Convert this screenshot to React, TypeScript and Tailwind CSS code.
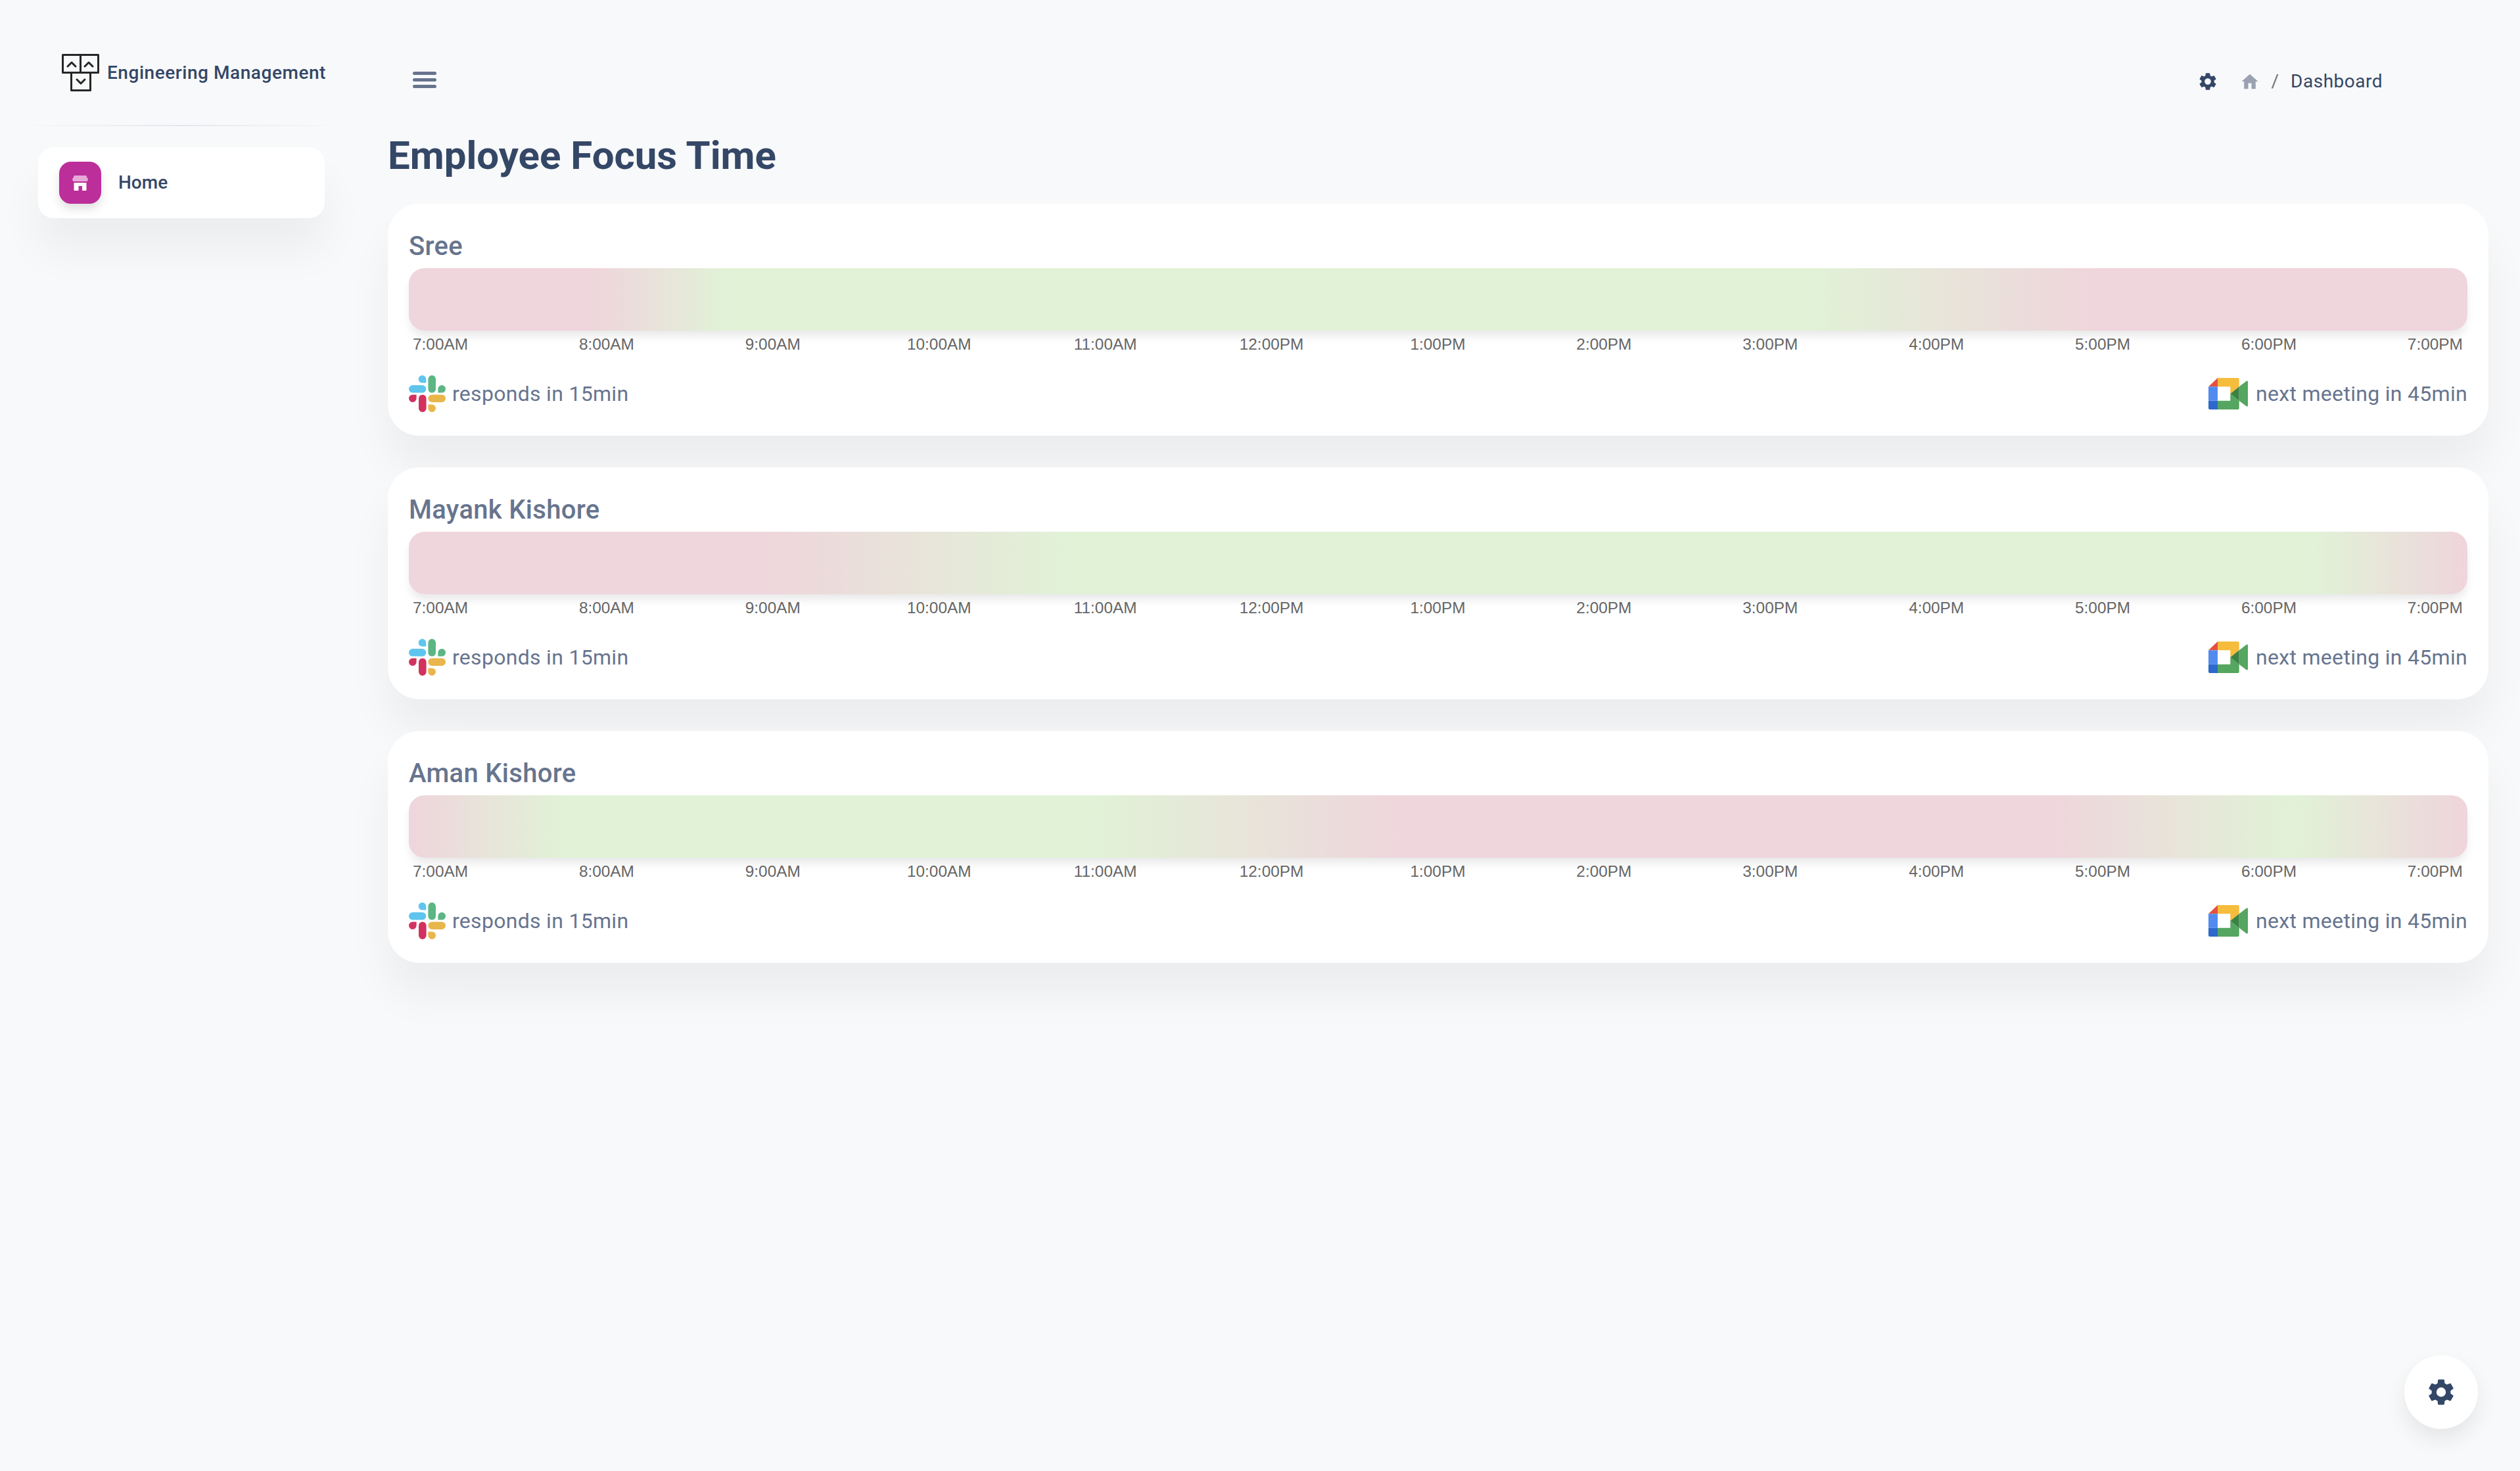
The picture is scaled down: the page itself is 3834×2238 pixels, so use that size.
const hours = ["7:00AM", "8:00AM", "9:00AM", "10:00AM", "11:00AM", "12:00PM", "1:00PM", "2:00PM", "3:00PM", "4:00PM", "5:00PM", "6:00PM", "7:00PM"]

const pink = "#efd5dc"
const green = "#e1f2d7"

const employees = [
  { name: "Sree", stops: `${pink} 0%, ${pink} 9%, ${green} 15.5%, ${green} 68%, ${pink} 82%, ${pink} 100%` },
  { name: "Mayank Kishore", stops: `${pink} 0%, ${pink} 17%, ${green} 32%, ${green} 92.500%, ${pink} 100%` },
  { name: "Aman Kishore", stops: `${pink} 0%, ${green} 7.500%, ${green} 33.500%, ${pink} 48.500%, ${pink} 79.500%, ${green} 91.500%, ${pink} 100%` },
]

function Gear({ className }: { className: string }) {
  return (
    <svg viewBox="0 0 24 24" className={className} fill="currentColor">
      <path d="M19.14 12.94c.04-.3.06-.61.06-.94 0-.32-.02-.64-.07-.94l2.03-1.58a.49.49 0 0 0 .12-.61l-1.92-3.32a.49.49 0 0 0-.59-.22l-2.39.96c-.5-.38-1.03-.7-1.62-.94l-.36-2.54a.48.48 0 0 0-.48-.41h-3.84c-.24 0-.43.17-.47.41l-.36 2.54c-.59.24-1.13.57-1.62.94l-2.39-.96c-.22-.08-.47 0-.59.22L2.74 8.87c-.12.21-.08.47.12.61l2.03 1.58c-.05.3-.09.63-.09.94s.02.64.07.94l-2.03 1.58a.49.49 0 0 0-.12.61l1.92 3.32c.12.22.37.29.59.22l2.39-.96c.5.38 1.03.7 1.62.94l.36 2.54c.05.24.24.41.48.41h3.84c.24 0 .44-.17.47-.41l.36-2.54c.59-.24 1.13-.56 1.62-.94l2.39.96c.22.08.47 0 .59-.22l1.92-3.32c.12-.22.07-.47-.12-.61l-2.01-1.58zM12 15.6A3.6 3.6 0 1 1 12 8.4a3.6 3.6 0 0 1 0 7.2z" />
    </svg>
  )
}

function Logo() {
  return (
    <svg viewBox="0 0 57 57" className="w-[57px] h-[57px] shrink-0" fill="none" stroke="#262626" strokeWidth="3" strokeLinejoin="round" strokeLinecap="round">
      <rect x="1.500" y="1.500" width="27" height="27" />
      <rect x="28.500" y="1.500" width="27" height="27" />
      <rect x="14.500" y="28.500" width="29" height="27" />
      <path d="M9 19l6-6 6 6M35 19l6-6 6 6M23 39l6 6 6-6" />
    </svg>
  )
}

function Slack() {
  return (
    <svg viewBox="0 0 56 56" className="w-[56px] h-[56px] shrink-0">
      <path fill="#5fc5ee" d="M20.500 0a5.800 5.800 0 0 0 0 11.600h5.800V5.800A5.800 5.800 0 0 0 20.500 0zM5.800 15A5.800 5.800 0 0 0 5.800 26.600h14.700a5.800 5.800 0 0 0 0-11.600z" />
      <path fill="#5cb683" d="M56 20.800a5.800 5.800 0 0 0-11.600 0v5.800h5.800a5.800 5.800 0 0 0 5.800-5.800zM41 20.800V5.800a5.800 5.800 0 0 0-11.600 0v15a5.800 5.800 0 0 0 11.600 0z" />
      <path fill="#e8b64a" d="M35.200 56a5.800 5.800 0 0 0 0-11.600h-5.800v5.800a5.800 5.800 0 0 0 5.800 5.800zM35.200 41h15a5.800 5.800 0 0 0 0-11.600h-15a5.800 5.800 0 0 0 0 11.600z" />
      <path fill="#d2325f" d="M0 35.200a5.800 5.800 0 0 0 11.600 0v-5.800H5.800A5.800 5.800 0 0 0 0 35.200zM15 35.200v15a5.800 5.800 0 0 0 11.600 0v-15a5.800 5.800 0 0 0-11.600 0z" />
    </svg>
  )
}

function Meet() {
  return (
    <svg viewBox="0 0 60 48" className="w-[60px] h-[48px] shrink-0">
      <path fill="#e2513e" d="M14 0L0 13.300h14z" />
      <path fill="#528af0" d="M0 13.300h14v21.400H0z" />
      <path fill="#2d68cb" d="M0 34.700h14V48H2a2 2 0 0 1-2-2z" />
      <path fill="#f6bc3c" d="M14 0h30.700a2 2 0 0 1 2 2v11.300L33.300 24V13.300H14z" />
      <path fill="#55a660" d="M14 34.700h19.300V24l13.400 10.700V46a2 2 0 0 1-2 2H14z" />
      <path fill="#55a660" d="M46.700 13.300L57.500 5c1-.8 2.500-.3 2.500 1v36c0 1.300-1.500 1.800-2.500 1L46.700 34.700z" />
      <path fill="#3a8244" d="M33.300 24l13.400-10.700v21.400z" />
    </svg>
  )
}

function Card({ name, stops }: { name: string; stops: string }) {
  return (
    <div className="bg-white rounded-[48px] h-[353px] px-[32px] pt-[36px] shadow-[0_49px_66px_rgba(0,0,0,0.05)]">
      <h2 className="text-[40px] leading-[57px] mb-[5px] font-medium tracking-[0.3px] text-[#67748e]">{name}</h2>
      <div className="h-[95px] rounded-[24px] shadow-[0_10px_15px_-3px_rgba(0,0,0,0.1)]" style={{ background: `linear-gradient(to right, ${stops})` }} />
      <div className="flex justify-between pl-[6px] pr-[7px] mt-[6px] text-[24.4px] leading-[30px] text-[#666666] font-['Liberation_Sans',sans-serif]">
        {hours.map(h => <span key={h} className="w-[84px] flex justify-center whitespace-nowrap">{h}</span>)}
      </div>
      <div className="flex justify-between items-center mt-[30px] text-[32px] leading-[60px] tracking-[0.3px] text-[#67748e]">
        <div className="flex items-center gap-[10px]">
          <Slack />
          <span>responds in 15min</span>
        </div>
        <div className="flex items-center gap-[12px]">
          <Meet />
          <span>next meeting in 45min</span>
        </div>
      </div>
    </div>
  )
}

export default function App() {
  return (
    <div className="min-h-[2238px] bg-[#f8f9fa] flex font-['Roboto',sans-serif] relative">
      {/* Sidebar */}
      <aside className="w-[590px] shrink-0 pl-[58px] pt-[82px]">
        <div className="flex items-center gap-[12px] pl-[36px] h-[57px]">
          <Logo />
          <span className="text-[28px] font-medium tracking-[0.55px] text-[#344767] whitespace-nowrap">Engineering Management</span>
        </div>
        <div className="h-[2px] mt-[51px] -ml-[28px] w-[492px] bg-gradient-to-r from-transparent via-[#e5e7ee] to-transparent" />
        <div className="mt-[32px] w-[436px] h-[108px] bg-white rounded-[24px] flex items-center pl-[32px] gap-[26px] shadow-[0_49px_66px_rgba(0,0,0,0.05)]">
          <div className="w-[64px] h-[64px] rounded-[18px] bg-[#bc2e9a] flex items-center justify-center shadow-[0_8px_14px_rgba(0,0,0,0.12)]">
            <svg viewBox="0 0 24 24" className="w-[24px] h-[24px]">
              <path fill="#e6a9d8" d="M3 1h18l3 6c0 .8-.5 2-2 3H2C.5 9 0 7.800 0 7z" />
              <path fill="#fff" d="M2.500 12h19v12h-6.500v-7H9.500v7h-7z" />
            </svg>
          </div>
          <span className="text-[28px] font-medium text-[#344767]">Home</span>
        </div>
      </aside>

      {/* Main */}
      <main className="flex-1 min-w-0 pr-[48px] pt-[88px]">
        <header className="flex items-center justify-between h-[66px]">
          <button className="ml-[38px] flex flex-col gap-[5px] w-[36px]">
            <span className="h-[5px] rounded-full bg-[#67748e]" />
            <span className="h-[5px] rounded-full bg-[#67748e]" />
            <span className="h-[5px] rounded-full bg-[#67748e]" />
          </button>
          <div className="flex items-center mr-[161px] mt-[5px] text-[#344767]">
            <Gear className="w-[32px] h-[32px]" />
            <svg viewBox="0 0 24 24" className="w-[30px] h-[30px] ml-[33px] text-[#9aa1b1]" fill="currentColor">
              <path d="M10 21v-7h4v7h5v-9h3L12 3 2 12h3v9z" />
            </svg>
            <span className="ml-[18px] text-[28px] text-[#6c757d]">/</span>
            <span className="ml-[18px] text-[28px] tracking-[0.5px]">Dashboard</span>
          </div>
        </header>
        <h1 className="mt-[47px] text-[60px] leading-[72px] font-bold text-[#344767]">Employee Focus Time</h1>
        <div className="mt-[37px] flex flex-col gap-[48px]">
          {employees.map(e => <Card key={e.name} name={e.name} stops={e.stops} />)}
        </div>
      </main>

      {/* Floating settings */}
      <button className="absolute left-[3658px] top-[2062px] w-[112px] h-[112px] rounded-full bg-white flex items-center justify-center text-[#344767] shadow-[0_16px_32px_rgba(0,0,0,0.08)]">
        <Gear className="w-[48px] h-[48px]" />
      </button>
    </div>
  )
}
